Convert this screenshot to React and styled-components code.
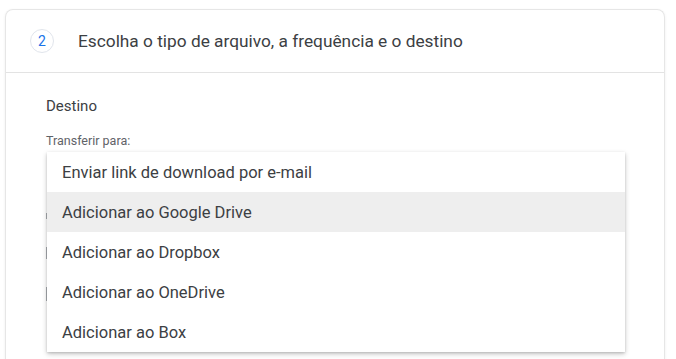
import React from 'react';
import styled, { createGlobalStyle } from 'styled-components';

const GlobalStyle = createGlobalStyle`
  html, body {
    margin: 0;
    padding: 0;
    background: #fff;
    font-family: Roboto, "Liberation Sans", Arial, sans-serif;
    overflow: hidden;
  }
`;

const Page = styled.div`
  padding: 9px 11px 0 5px;
  height: 359px;
  box-sizing: border-box;
`;

const Card = styled.section`
  border: 1px solid #e6e6e6;
  border-bottom: none;
  border-radius: 8px 8px 0 0;
  box-shadow: 0 1px 3px rgba(60, 64, 67, 0.08);
  height: 100%;
  box-sizing: border-box;
`;

const Header = styled.header`
  display: flex;
  align-items: center;
  gap: 24px;
  height: 62px;
  padding-left: 24px;
  border-bottom: 1px solid #e3e3e3;
`;

const StepBadge = styled.span`
  width: 22px;
  height: 22px;
  border: 1px solid #e1e5ec;
  border-radius: 50%;
  display: flex;
  align-items: center;
  justify-content: center;
  color: #1a73e8;
  font-size: 14px;
  line-height: 1;
`;

const Title = styled.h2`
  margin: 0;
  font-size: 17.3px;
  font-weight: 400;
  color: #3c4043;
`;

const Body = styled.div`
  padding: 23px 40px 0 40px;
`;

const SectionLabel = styled.div`
  font-size: 15px;
  line-height: 20px;
  color: #3c4043;
`;

const FieldLabel = styled.div`
  margin-top: 17px;
  font-size: 12.5px;
  line-height: 16px;
  color: #5f6368;
`;

const Field = styled.div`
  position: relative;
  margin-top: 3px;
  height: 200px;
`;

/* edges of the controls hidden under the open menu */
const Behind = styled.div`
  display: flex;
  flex-direction: column;
  align-items: flex-start;
  padding-top: 61px;
  gap: 28px;
`;

const Tick = styled.span`
  display: block;
  width: 1px;
  height: ${p => p.h}px;
  background: #a9acb0;
`;

const Menu = styled.ul`
  position: absolute;
  top: 0;
  left: 1px;
  width: 578px;
  margin: 0;
  padding: 0;
  list-style: none;
  background: #fff;
  box-shadow: 0 2px 5px rgba(0, 0, 0, 0.22), 0 1px 2px rgba(0, 0, 0, 0.12);
`;

const MenuItem = styled.li`
  height: 40px;
  display: flex;
  align-items: center;
  padding-left: 15px;
  font-size: 16.5px;
  color: #3c4043;
  background: ${p => (p.active ? '#eeeeee' : '#fff')};
`;

const options = [
  'Enviar link de download por e-mail',
  'Adicionar ao Google Drive',
  'Adicionar ao Dropbox',
  'Adicionar ao OneDrive',
  'Adicionar ao Box',
];

export default function App() {
  return (
    <>
      <GlobalStyle />
      <Page>
        <Card>
          <Header>
            <StepBadge>2</StepBadge>
            <Title>Escolha o tipo de arquivo, a frequência e o destino</Title>
          </Header>
          <Body>
            <SectionLabel>Destino</SectionLabel>
            <FieldLabel>Transferir para:</FieldLabel>
            <Field>
              <Behind>
                <Tick h={6} />
                <Tick h={12} />
                <Tick h={14} />
              </Behind>
              <Menu>
                {options.map((o, i) => (
                  <MenuItem key={o} active={i === 1}>{o}</MenuItem>
                ))}
              </Menu>
            </Field>
          </Body>
        </Card>
      </Page>
    </>
  );
}
